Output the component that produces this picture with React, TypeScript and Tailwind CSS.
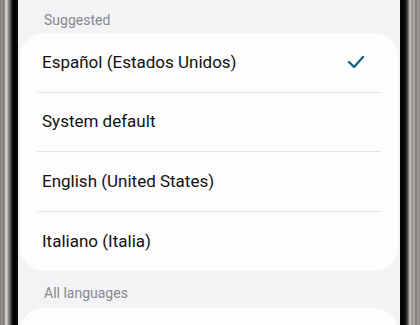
const suggested = [
  { label: 'Español (Estados Unidos)', selected: true },
  { label: 'System default' },
  { label: 'English (United States)' },
  { label: 'Italiano (Italia)' },
];

function Check() {
  return (
    <svg width="18" height="16" viewBox="0 0 18 16" fill="none">
      <polyline
        points="2,8 7,13 16,3"
        stroke="#1a6488"
        strokeWidth="2.4"
        strokeLinecap="round"
        strokeLinejoin="round"
      />
    </svg>
  );
}

export default function App() {
  return (
    <div
      className="flex h-[325px] w-[420px] overflow-hidden bg-[#f3f3f5]"
      style={{ fontFamily: 'Roboto, "Noto Sans", sans-serif' }}
    >
      {/* left phone frame */}
      <div className="w-[18px] shrink-0 bg-[linear-gradient(to_right,#7f7a75_0px,#9c9792_2px,#77726d_4px,#e6e3e0_6px,#a29d98_8px,#6a6561_10px,#1c1c1c_12px,#000_14px,#0d0d0d_18px)]" />

      <div className="flex-1 px-[2px]">
        <div className="flex h-[33px] items-center pt-[7px] pl-[24px] text-[14px] text-[#88888d]">
          Suggested
        </div>

        <div className="rounded-[24px] bg-[#fdfdfd] px-[17px]">
          {suggested.map((item, i) => (
            <div
              key={item.label}
              className={
                'flex h-[59.5px] items-center justify-between pl-[5px] pr-[16px] ' +
                (i < suggested.length - 1 ? 'border-b border-[#e3e3e5]' : '')
              }
            >
              <span className="text-[17px] text-[#111111]">{item.label}</span>
              {item.selected && <Check />}
            </div>
          ))}
        </div>

        <div className="flex h-[37px] items-center pt-[8px] pl-[24px] text-[14px] text-[#88888d]">
          All languages
        </div>

        <div className="h-[60px] rounded-[24px] bg-[#fdfdfd]" />
      </div>

      {/* right phone frame */}
      <div className="w-[20px] shrink-0 bg-[linear-gradient(to_right,#0d0d0d_0px,#000_3px,#1c1c1c_6px,#5e5955_8px,#cfcbc7_10px,#8f8a86_12px,#b5b0ab_14px,#7a7571_16px,#a49f9a_18px,#86817c_20px)]" />
    </div>
  );
}
